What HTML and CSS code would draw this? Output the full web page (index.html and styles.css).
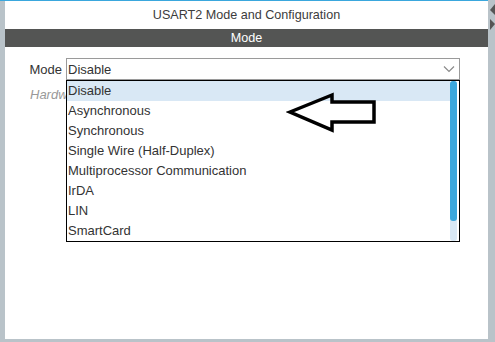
FILE: index.html
```html
<!DOCTYPE html>
<html>
<head>
<meta charset="utf-8">
<link rel="stylesheet" href="styles.css">
</head>
<body>
<div class="frame">
  <div class="row">
    <div class="strip-left"></div>
    <div class="panel">
      <div class="title">USART2 Mode and Configuration</div>
      <div class="band">Mode</div>
      <div class="form">
        <div class="field">
          <span class="label">Mode</span>
          <div class="select">
            <span class="value">Disable</span>
            <svg class="chev" width="12" height="8" viewBox="0 0 12 8"><path d="M1 1.5 L6 6.5 L11 1.5" fill="none" stroke="#8a8a8a" stroke-width="1.2"/></svg>
          </div>
        </div>
        <div class="hint-row"><div class="hint">Hardware Flow Control (RS232)</div></div>
        <div class="list">
          <div class="items">
            <div class="item sel">Disable</div>
            <div class="item">Asynchronous</div>
            <div class="item">Synchronous</div>
            <div class="item">Single Wire (Half-Duplex)</div>
            <div class="item">Multiprocessor Communication</div>
            <div class="item">IrDA</div>
            <div class="item">LIN</div>
            <div class="item">SmartCard</div>
          </div>
          <div class="track"><div class="thumb"></div></div>
        </div>
      </div>
      <svg class="arrow" width="100" height="50" viewBox="0 0 100 50"><polygon points="4,22 46,5 46,12 88,12 88,32 46,32 46,40" fill="none" stroke="#000" stroke-width="3.5" stroke-linejoin="miter"/></svg>
    </div>
    <div class="strip-right">
      <svg width="7" height="34" viewBox="0 0 7 34"><polygon points="7,3 2,9 7,14" fill="#555"/><polygon points="2,18 7,23 2,29" fill="#555"/></svg>
    </div>
  </div>
  <div class="strip-bottom"></div>
</div>
</body>
</html>
```
FILE: styles.css
```css
html, body {
  margin: 0;
  padding: 0;
  background: #b9c3c9;
}
body {
  width: 495px;
  height: 342px;
  overflow: hidden;
  font-family: "Liberation Sans", Arial, sans-serif;
  font-size: 12px;
  color: #333;
}
.frame {
  display: flex;
  flex-direction: column;
  width: 495px;
  height: 342px;
}
.row {
  display: flex;
  height: 339px;
}
.strip-left {
  width: 5px;
  background: #b9c3c9;
  border-top: 1px solid #3aa7dd;
}
.panel {
  position: relative;
  width: 483px;
  background: #fff;
  border-top: 1px solid #3aa7dd;
  display: flex;
  flex-direction: column;
}
.strip-right {
  width: 7px;
  background: #b9c3c9;
  display: flex;
  flex-direction: column;
  align-items: flex-end;
  padding-top: 1px;
}
.strip-bottom {
  height: 3px;
  background: #b9c3c9;
}
.title {
  height: 28px;
  line-height: 28px;
  text-align: center;
  font-size: 12.6px;
  color: #3c3c3c;
}
.band {
  height: 18px;
  line-height: 18px;
  background: #545554;
  color: #fff;
  text-align: center;
  font-size: 12.6px;
}
.form {
  position: relative;
  padding-top: 11px;
}
.field {
  display: flex;
  align-items: center;
  height: 22px;
}
.label {
  width: 57px;
  text-align: right;
  padding-right: 4px;
  font-size: 13px;
  color: #333;
}
.select {
  box-sizing: border-box;
  width: 394px;
  height: 22px;
  border: 1px solid #9a9a9a;
  display: flex;
  align-items: center;
  justify-content: space-between;
  padding: 0 4px 0 1px;
}
.value {
  font-size: 13px;
}
.hint-row {
  padding-left: 25px;
  padding-top: 7px;
}
.hint {
  width: 36px;
  overflow: hidden;
  white-space: nowrap;
  font-style: italic;
  color: #999;
  font-size: 13px;
}
.list {
  position: absolute;
  left: 61px;
  top: 33px;
  width: 392px;
  height: 160px;
  border: 1px solid #000;
  background: #fff;
  display: flex;
}
.items {
  flex: 1;
  display: flex;
  flex-direction: column;
}
.item {
  height: 20px;
  line-height: 20px;
  padding-left: 1px;
  font-size: 13px;
  color: #333;
}
.item.sel {
  background: #d9e8f5;
}
.track {
  width: 7px;
  margin-right: 2px;
  background: #d9e8f5;
  border-radius: 3px;
  display: flex;
  flex-direction: column;
}
.thumb {
  height: 140px;
  background: #3ba7dc;
  border-radius: 3px;
}
.arrow {
  position: absolute;
  left: 281px;
  top: 89px;
}
```
